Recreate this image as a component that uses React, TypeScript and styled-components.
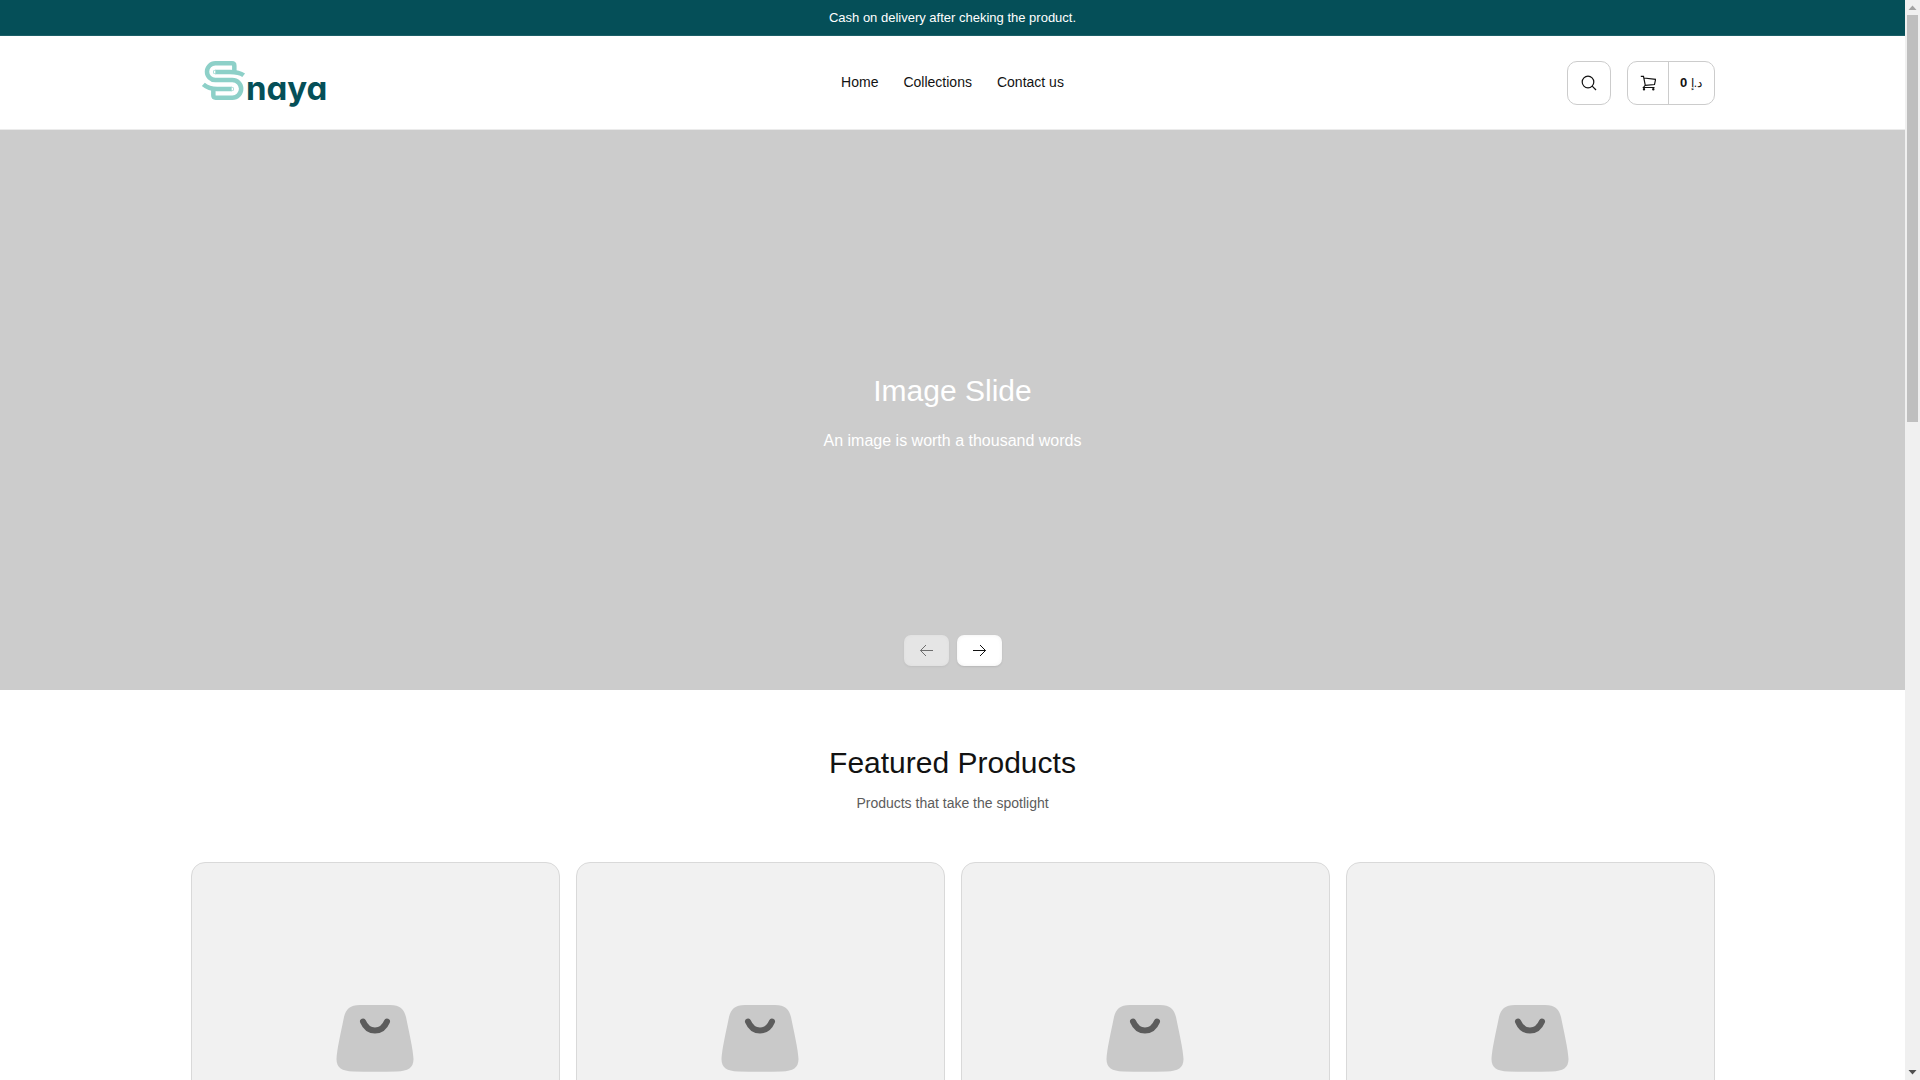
import React from 'react';
import styled, { createGlobalStyle } from 'styled-components';

const GlobalStyle = createGlobalStyle`
  *, *::before, *::after { box-sizing: border-box; }
  body {
    margin: 0;
    background: #fff;
    color: #121212;
    font-family: "Liberation Sans", Arial, sans-serif;
    overflow: hidden;
  }
  h1, h2, p, ul { margin: 0; padding: 0; font-weight: 400; }
  button { font: inherit; color: inherit; cursor: pointer; }
`;

const Shell = styled.div`
  display: grid;
  grid-template-columns: minmax(0, 1fr) 15px;
  height: 100vh;
  overflow: hidden;
`;

const Page = styled.div`
  overflow: hidden;
`;

const Container = styled.div`
  width: 80%;
  margin: 0 auto;
`;

const Announcement = styled.p`
  background: #054f58;
  border-bottom: 1px solid #1b5f67;
  color: #fff;
  font-size: 13px;
  line-height: 35px;
  text-align: center;
`;

const Header = styled.header`
  border-bottom: 1px solid #ebebeb;
  padding: 25px 0 24px;
`;

const HeaderRow = styled(Container)`
  display: grid;
  grid-template-columns: 1fr auto 1fr;
  align-items: center;
`;

const LogoLink = styled.a`
  display: block;
  justify-self: start;
  height: 44px;
  svg { display: block; overflow: visible; }
`;

const Wordmark = styled.text`
  font-family: Inter, sans-serif;
  font-size: 33px;
  font-weight: 700;
  font-feature-settings: "cv11";
  fill: #054f58;
`;

const NavList = styled.ul`
  display: flex;
  gap: 25px;
  padding-bottom: 2px;
  list-style: none;
`;

const NavLink = styled.a`
  color: #121212;
  font-size: 14px;
  line-height: 20px;
  text-decoration: none;
`;

const Actions = styled.div`
  display: flex;
  justify-content: flex-end;
  gap: 16px;
`;

const ActionButton = styled.button<{ $wide?: boolean }>`
  display: flex;
  align-items: stretch;
  width: ${p => (p.$wide ? 88 : 44)}px;
  height: 44px;
  padding: 0;
  background: #fff;
  border: 1px solid #ccc;
  border-radius: 10px;
`;

const IconCell = styled.span`
  display: grid;
  flex: 1;
  place-items: center;
`;

const Price = styled.span`
  width: 46px;
  border-left: 1px solid #ccc;
  font-size: 13px;
  font-weight: 700;
  line-height: 42px;
  text-align: center;
`;

const Currency = styled.span`
  font-size: 12px;
  font-weight: 400;
`;

const Hero = styled.section`
  display: grid;
  grid-template-rows: 1fr auto 1fr;
  justify-items: center;
  height: 560px;
  padding: 0 0 24px;
  background: #ccc;
`;

const HeroText = styled.div`
  grid-row: 2;
  padding-top: 30px;
  color: #fff;
  text-align: center;
`;

const Title = styled.h2`
  font-size: 30px;
  line-height: 40px;
`;

const HeroSubtitle = styled.p`
  margin-top: 16px;
  font-size: 16px;
  line-height: 28px;
`;

const SlideControls = styled.div`
  display: flex;
  grid-row: 3;
  align-self: end;
  gap: 8px;
`;

const SlideButton = styled.button`
  display: grid;
  place-items: center;
  width: 45px;
  height: 31px;
  padding: 0;
  border: 0;
  border-radius: 7px;
  background: #fff;
  box-shadow: 0 1px 2px rgba(0, 0, 0, 0.1), inset 0 0 4px rgba(0, 0, 0, 0.06);
  &:disabled { opacity: 0.5; cursor: default; }
`;

const Featured = styled.section`
  padding-top: 53px;
`;

const SectionHead = styled.div`
  text-align: center;
`;

const SectionSubtitle = styled.p`
  margin-top: 10px;
  color: #5c5c5c;
  font-size: 14px;
  line-height: 20px;
`;

const ProductGrid = styled(Container)`
  display: grid;
  grid-template-columns: repeat(4, minmax(0, 1fr));
  gap: 16px;
  margin-top: 49px;
`;

const ProductCard = styled.article`
  overflow: hidden;
  padding-bottom: 80px;
  background: #f1f1f1;
  border: 1px solid #d9d9d9;
  border-radius: 14px;
`;

const ProductMedia = styled.div`
  display: grid;
  place-items: center;
  aspect-ratio: 22 / 21;
`;

const Scrollbar = styled.div`
  display: flex;
  flex-direction: column;
  align-items: center;
  justify-content: space-between;
  background: #f0f0f0;
`;

const ScrollTop = styled.div`
  display: flex;
  flex-direction: column;
  align-items: center;
  width: 100%;
`;

const Thumb = styled.div`
  width: 11px;
  height: 407px;
  background: #bfbfbf;
`;

const Arrow = styled.svg`
  display: block;
  width: 15px;
  height: 15px;
`;

const Logo = () => (
  <svg width="150" height="44" viewBox="0 0 150 44" role="img" aria-label="Snaya">
    <g transform="translate(-11 -21) scale(0.33333)" fill="none" stroke="#8dd0c8" strokeWidth="13.5">
      <path d="M163 96V77Q163 70 156 70H106A25 25 0 0 0 106 120H157A26.500 26.500 0 0 1 157 173H107Q100 173 100 166V149" />
      <path d="M106 96H150C169 96 182 99 191 106" />
      <circle cx="106" cy="96" r="1" strokeWidth="12" />
      <path d="M155 147H112C92 147 80 142 70 133" />
      <circle cx="155" cy="147" r="1" strokeWidth="12" />
    </g>
    <Wordmark x="55" y="39">naya</Wordmark>
  </svg>
);

const Bag = () => (
  <svg width="78" height="67" viewBox="0 0 78 67" aria-hidden="true">
    <path
      d="M24 0H54C64 0 68 4 70 12C73 27 77 44 77.500 54C77.500 63 72 66 61 66.500Q39 67 17 66.500C6 66 .500 63 .500 54C1 44 5 27 8 12C10 4 14 0 24 0Z"
      fill="#c9c9c9"
    />
    <path d="M27 16.500C32 28.500 46 28.500 51 16.500" fill="none" stroke="#5c5c5c" strokeWidth="6" strokeLinecap="round" />
  </svg>
);

const SlideArrow = ({ back }: { back?: boolean }) => (
  <svg width="15" height="15" viewBox="0 0 15 15" fill="none" stroke="#121212" aria-hidden="true">
    <path d={back ? 'M14 7.500H1.500M7 2L1.500 7.500L7 13' : 'M1 7.500H13.500M8 2L13.500 7.500L8 13'} />
  </svg>
);

const navItems = ['Home', 'Collections', 'Contact us'];
const products = [1, 2, 3, 4];

export default function App() {
  return (
    <>
      <GlobalStyle />
      <Shell>
        <Page>
          <Announcement>Cash on delivery after cheking the product.</Announcement>
          <Header>
            <HeaderRow>
              <LogoLink href="#"><Logo /></LogoLink>
              <nav>
                <NavList>
                  {navItems.map(item => (
                    <li key={item}><NavLink href="#">{item}</NavLink></li>
                  ))}
                </NavList>
              </nav>
              <Actions>
                <ActionButton aria-label="Search">
                  <IconCell>
                    <svg width="16" height="16" viewBox="0 0 16 16" fill="none" stroke="#121212" strokeWidth="1.200">
                      <circle cx="7" cy="7" r="5.800" />
                      <path d="M11.200 11.200L15 15" />
                    </svg>
                  </IconCell>
                </ActionButton>
                <ActionButton $wide aria-label="Cart">
                  <IconCell>
                    <svg width="16" height="16" viewBox="0 0 16 16" fill="none" stroke="#121212" strokeWidth="1.200">
                      <path d="M.8 1.300H3.500L5.300 10.500M4 3L15.600 4.300L14.500 9.500L5.200 10.300M5 10.500L3.500 12.500H14.500" />
                      <circle cx="4" cy="14.300" r=".6" fill="#121212" />
                      <circle cx="13.300" cy="14.300" r=".6" fill="#121212" />
                    </svg>
                  </IconCell>
                  <Price><Currency>د.إ</Currency> 0</Price>
                </ActionButton>
              </Actions>
            </HeaderRow>
          </Header>
          <main>
            <Hero>
              <HeroText>
                <Title>Image Slide</Title>
                <HeroSubtitle>An image is worth a thousand words</HeroSubtitle>
              </HeroText>
              <SlideControls>
                <SlideButton disabled aria-label="Previous slide"><SlideArrow back /></SlideButton>
                <SlideButton aria-label="Next slide"><SlideArrow /></SlideButton>
              </SlideControls>
            </Hero>
            <Featured>
              <SectionHead>
                <Title>Featured Products</Title>
                <SectionSubtitle>Products that take the spotlight</SectionSubtitle>
              </SectionHead>
              <ProductGrid>
                {products.map(id => (
                  <ProductCard key={id}>
                    <ProductMedia><Bag /></ProductMedia>
                  </ProductCard>
                ))}
              </ProductGrid>
            </Featured>
          </main>
        </Page>
        <Scrollbar aria-hidden="true">
          <ScrollTop>
            <Arrow viewBox="0 0 15 15"><path d="M7.500 5.500L11.500 10H3.500Z" fill="#a3a3a3" /></Arrow>
            <Thumb />
          </ScrollTop>
          <Arrow viewBox="0 0 15 15"><path d="M3.500 5H11.500L7.500 9.500Z" fill="#505050" /></Arrow>
        </Scrollbar>
      </Shell>
    </>
  );
}
